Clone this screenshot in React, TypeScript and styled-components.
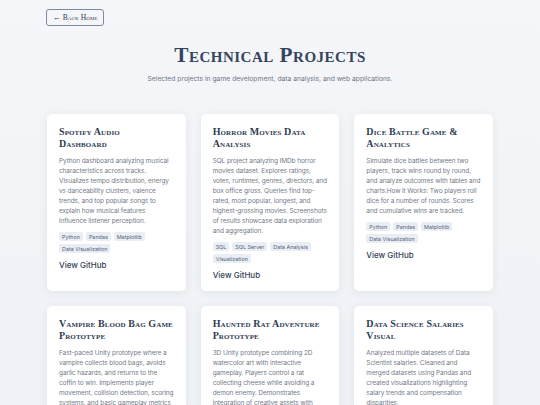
import React from "react";
import styled, { createGlobalStyle } from "styled-components";

const GlobalStyle = createGlobalStyle`
  html, body {
    margin: 0;
    padding: 0;
  }
  body {
    background: linear-gradient(180deg, #f4f6f9 0%, #eef1f5 100%);
    min-height: 405px;
    font-family: Inter, "Noto Sans", sans-serif;
    color: #334155;
  }
`;

type Project = {
  title: string;
  description: string;
  tags: string[];
};

const projects: Project[] = [
  {
    title: "Spotify Audio\nDashboard",
    description:
      "Python dashboard analyzing musical characteristics across tracks. Visualizes tempo distribution, energy vs danceability clusters, valence trends, and top popular songs to explain how musical features influence listener perception.",
    tags: ["Python", "Pandas", "Matplotlib", "Data Visualization"],
  },
  {
    title: "Horror Movies Data\nAnalysis",
    description:
      "SQL project analyzing IMDb horror movies dataset. Explores ratings, votes, runtimes, genres, directors, and box office gross. Queries find top-rated, most popular, longest, and highest-grossing movies. Screenshots of results showcase data exploration and aggregation.",
    tags: ["SQL", "SQL Server", "Data Analysis", "Visualization"],
  },
  {
    title: "Dice Battle Game &\nAnalytics",
    description:
      "Simulate dice battles between two players, track wins round by round, and analyze outcomes with tables and charts.How it Works: Two players roll dice for a number of rounds. Scores and cumulative wins are tracked.",
    tags: ["Python", "Pandas", "Matplotlib", "Data Visualization"],
  },
  {
    title: "Vampire Blood Bag Game\nPrototype",
    description:
      "Fast-paced Unity prototype where a vampire collects blood bags, avoids garlic hazards, and returns to the coffin to win. Implements player movement, collision detection, scoring systems, and basic gameplay metrics tracking.",
    tags: ["Unity", "C#", "Game Design"],
  },
  {
    title: "Haunted Rat Adventure\nPrototype",
    description:
      "3D Unity prototype combining 2D watercolor art with interactive gameplay. Players control a rat collecting cheese while avoiding a demon enemy. Demonstrates integration of creative assets with gameplay mechanics.",
    tags: ["Unity", "C#", "3D"],
  },
  {
    title: "Data Science Salaries\nVisual",
    description:
      "Analyzed multiple datasets of Data Scientist salaries. Cleaned and merged datasets using Pandas and created visualizations highlighting salary trends and compensation disparities.",
    tags: ["Python", "Pandas", "Seaborn"],
  },
];

const Page = styled.main`
  width: 446px;
  margin: 0 auto;
  padding: 9px 0 24px;
`;

const TopBar = styled.nav`
  display: flex;
`;

const BackButton = styled.a`
  display: inline-flex;
  align-items: center;
  height: 17px;
  box-sizing: border-box;
  padding: 0 5px 0 6px;
  border: 1px solid #7c8aa0;
  border-radius: 3px;
  font-family: "Liberation Serif", "DejaVu Serif", serif;
  font-variant: small-caps;
  font-size: 7.6px;
  letter-spacing: 0.1px;
  color: #334155;
  text-decoration: none;
  margin-left: -1px;
`;

const Header = styled.header`
  display: flex;
  flex-direction: column;
  align-items: center;
  margin-top: 16px;
  margin-bottom: 31px;
`;

const Title = styled.h1`
  margin: 0;
  font-family: "Liberation Serif", "DejaVu Serif", serif;
  font-variant: small-caps;
  font-weight: 700;
  font-size: 21.3px;
  line-height: 26px;
  letter-spacing: 0.5px;
  color: #34445c;
`;

const Subtitle = styled.p`
  margin: 6px 0 0;
  font-size: 6.75px;
  line-height: 9px;
  color: #6f7785;
`;

const Grid = styled.section`
  display: grid;
  grid-template-columns: repeat(3, 1fr);
  column-gap: 15px;
  row-gap: 15px;
`;

const Card = styled.article`
  background: #ffffff;
  border-radius: 5px;
  padding: 12px 12px 11px;
  box-shadow: 0 2px 10px rgba(30, 41, 59, 0.07);
  display: flex;
  flex-direction: column;
`;

const CardTitle = styled.h2`
  margin: 0;
  font-family: "Liberation Serif", "DejaVu Serif", serif;
  font-variant: small-caps;
  font-weight: 700;
  font-size: 10px;
  line-height: 11.5px;
  letter-spacing: 0.1px;
  white-space: pre-line;
  color: #2f3d52;
`;

const Description = styled.p`
  margin: 7px 0 0;
  font-size: 6.5px;
  line-height: 10px;
  letter-spacing: -0.1px;
  color: #737b89;
`;

const Tags = styled.div`
  display: flex;
  flex-wrap: wrap;
  gap: 3px;
  margin-top: 6px;
`;

const Tag = styled.span`
  display: inline-flex;
  align-items: center;
  height: 9px;
  padding: 0 3px;
  border-radius: 2px;
  background: #e9eef5;
  font-size: 5.4px;
  color: #55637a;
`;

const GitHubLink = styled.a`
  margin-top: 7px;
  font-size: 8px;
  font-weight: 500;
  color: #334155;
  text-decoration: none;
`;

export default function App() {
  return (
    <>
      <GlobalStyle />
      <Page>
        <TopBar>
          <BackButton href="#">← Back Home</BackButton>
        </TopBar>
        <Header>
          <Title>Technical Projects</Title>
          <Subtitle>
            Selected projects in game development, data analysis, and web applications.
          </Subtitle>
        </Header>
        <Grid>
          {projects.map((p) => (
            <Card key={p.title}>
              <CardTitle>{p.title}</CardTitle>
              <Description>{p.description}</Description>
              <Tags>
                {p.tags.map((t) => (
                  <Tag key={t}>{t}</Tag>
                ))}
              </Tags>
              <GitHubLink href="#">View GitHub</GitHubLink>
            </Card>
          ))}
        </Grid>
      </Page>
    </>
  );
}
